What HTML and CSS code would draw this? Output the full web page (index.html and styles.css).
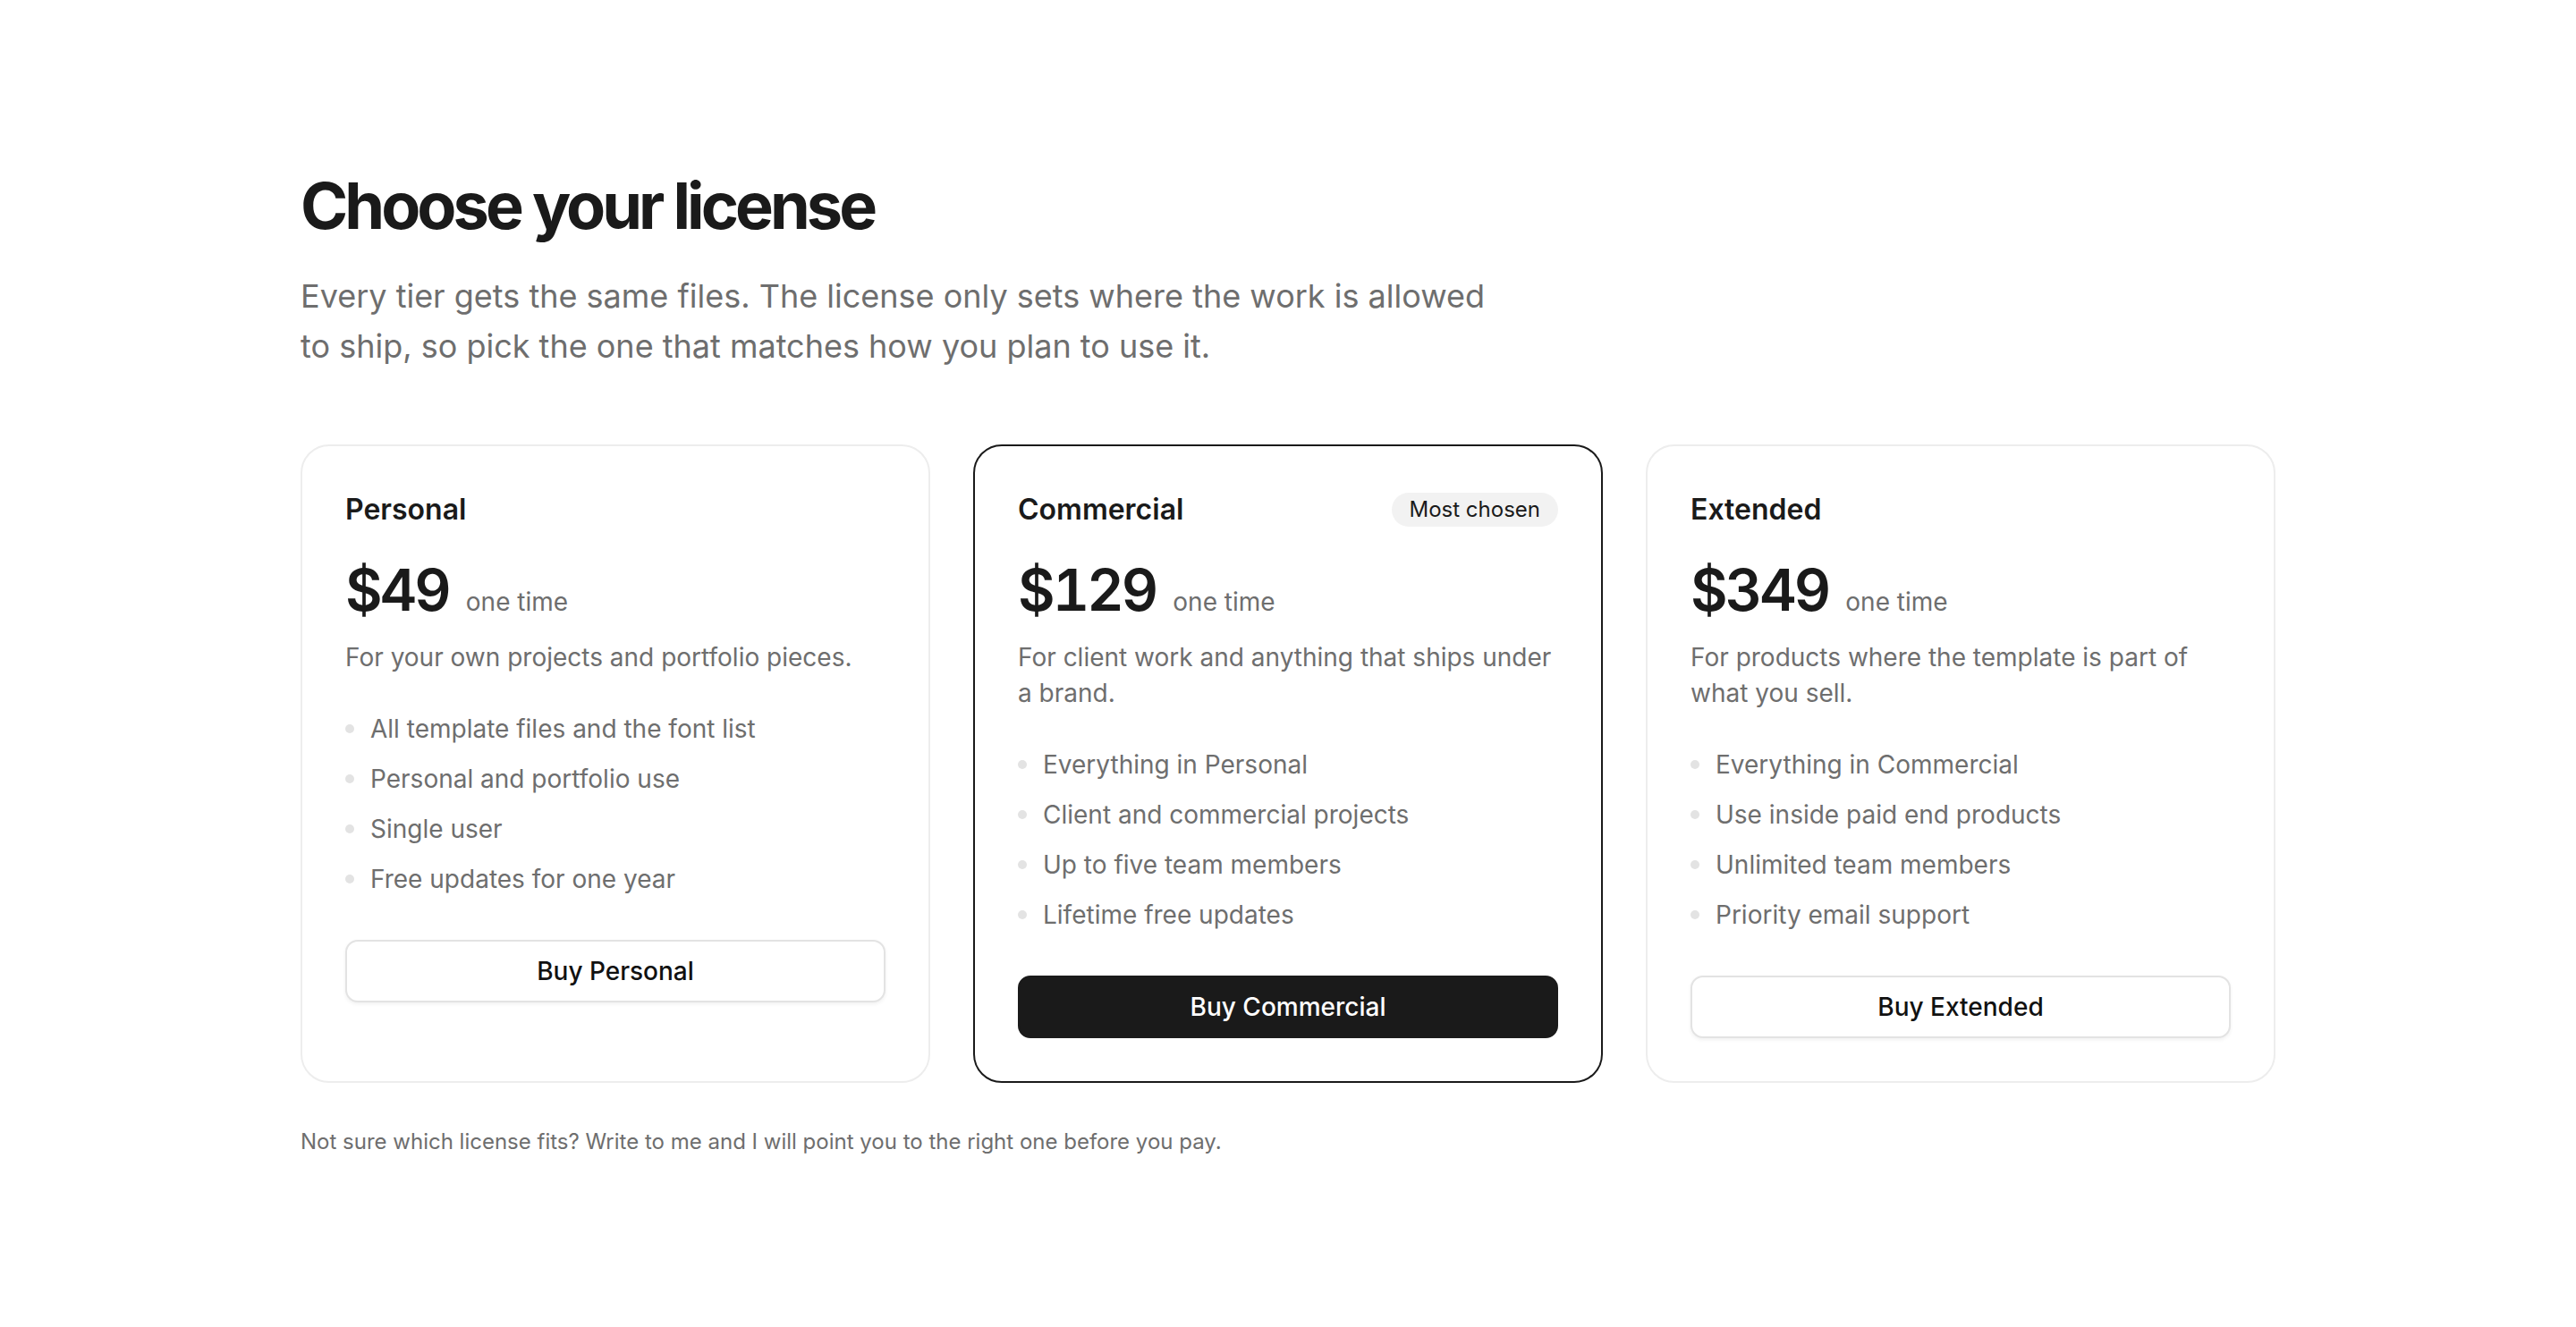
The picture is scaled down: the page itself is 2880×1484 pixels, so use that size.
FILE: index.html
```html
<!DOCTYPE html>
<html lang="en">
<head>
    <meta charset="UTF-8" />
    <meta name="viewport" content="width=device-width, initial-scale=1.0"/>
    <title>Choose your license</title>
    <link rel="stylesheet" href="styles.css">
</head>
<body>
<main class="page">
    <header class="intro">
        <h1>Choose your license</h1>
        <p class="lede">Every tier gets the same files. The license only sets where the work is allowed to ship, so pick the one that matches how you plan to use it.</p>
    </header>

    <section class="plans">
        <article class="plan">
            <div class="plan-head">
                <h2>Personal</h2>
            </div>
            <div class="price">
                <span class="amount">$49</span>
                <span class="term">one time</span>
            </div>
            <p class="plan-desc">For your own projects and portfolio pieces.</p>
            <ul class="features">
                <li>All template files and the font list</li>
                <li>Personal and portfolio use</li>
                <li>Single user</li>
                <li>Free updates for one year</li>
            </ul>
            <button class="buy" type="button">Buy Personal</button>
        </article>

        <article class="plan featured">
            <div class="plan-head">
                <h2>Commercial</h2>
                <span class="badge">Most chosen</span>
            </div>
            <div class="price">
                <span class="amount">$129</span>
                <span class="term">one time</span>
            </div>
            <p class="plan-desc">For client work and anything that ships under a brand.</p>
            <ul class="features">
                <li>Everything in Personal</li>
                <li>Client and commercial projects</li>
                <li>Up to five team members</li>
                <li>Lifetime free updates</li>
            </ul>
            <button class="buy buy-dark" type="button">Buy Commercial</button>
        </article>

        <article class="plan">
            <div class="plan-head">
                <h2>Extended</h2>
            </div>
            <div class="price">
                <span class="amount">$349</span>
                <span class="term">one time</span>
            </div>
            <p class="plan-desc">For products where the template is part of what you sell.</p>
            <ul class="features">
                <li>Everything in Commercial</li>
                <li>Use inside paid end products</li>
                <li>Unlimited team members</li>
                <li>Priority email support</li>
            </ul>
            <button class="buy" type="button">Buy Extended</button>
        </article>
    </section>

    <p class="note">Not sure which license fits? Write to me and I will point you to the right one before you pay.</p>
</main>
</body>
</html>
```

FILE: styles.css
```css
body {
    margin: 0;
    font-family: Inter, "Noto Sans", sans-serif;
    color: #1a1a1a;
    background: #fff;
}
.page {
    max-width: 2208px;
    margin: 0 auto;
    padding: 190px 0 120px;
}
h1 {
    margin: 0;
    font-size: 72px;
    font-weight: 700;
    line-height: 1.1;
    letter-spacing: -0.055em;
}
.lede {
    max-width: 1340px;
    margin: 34px 0 0;
    font-size: 36px;
    line-height: 56px;
    color: #6e6e6e;
}
.plans {
    display: grid;
    grid-template-columns: repeat(3, 1fr);
    gap: 48px;
    margin-top: 82px;
}
.plan {
    border: 2px solid #ededed;
    border-radius: 32px;
    padding: 48px;
}
.plan.featured {
    border-color: #1a1a1a;
}
.plan-head {
    display: flex;
    justify-content: space-between;
    align-items: center;
}
.plan-head h2 {
    margin: 0;
    font-size: 32px;
    font-weight: 600;
    line-height: 46px;
}
.badge {
    padding: 0 20px;
    border-radius: 999px;
    background: #f2f2f2;
    font-size: 24px;
    line-height: 38px;
}
.price {
    display: flex;
    align-items: baseline;
    gap: 19px;
    margin-top: 35px;
}
.amount {
    font-size: 64px;
    font-weight: 600;
    line-height: 1;
    letter-spacing: -0.045em;
    font-variant-numeric: tabular-nums;
}
.term {
    font-size: 28px;
    color: #6e6e6e;
}
.plan-desc {
    margin: 23px 0 0;
    font-size: 28px;
    line-height: 40px;
    color: #6e6e6e;
}
.features {
    list-style: none;
    display: flex;
    flex-direction: column;
    gap: 16px;
    margin: 40px 0 0;
    padding: 0;
}
.features li {
    display: flex;
    align-items: center;
    gap: 18px;
    font-size: 28px;
    line-height: 40px;
    color: #6e6e6e;
}
.features li::before {
    content: "";
    flex: none;
    width: 10px;
    height: 10px;
    border-radius: 50%;
    background: #e3e3e3;
}
.buy {
    display: block;
    width: 100%;
    margin-top: 48px;
    padding: 15px 20px;
    border: 2px solid #e3e3e3;
    border-radius: 14px;
    background: #fff;
    box-shadow: 0 2px 4px rgba(0, 0, 0, 0.06);
    font-family: inherit;
    font-size: 28px;
    font-weight: 500;
    line-height: 36px;
    color: #111;
    cursor: pointer;
}
.buy-dark {
    border-color: #1a1a1a;
    background: #1a1a1a;
    box-shadow: none;
    color: #fff;
}
.note {
    margin: 48px 0 0;
    font-size: 24px;
    line-height: 36px;
    color: #6e6e6e;
}
```
